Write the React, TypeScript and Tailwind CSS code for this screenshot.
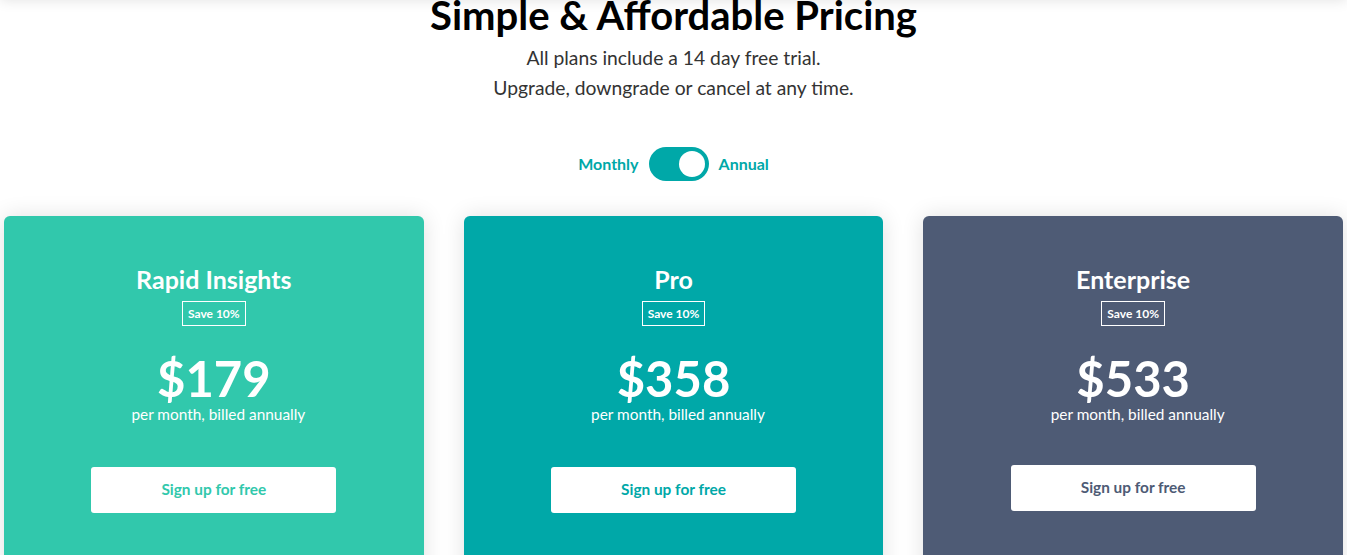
import React from "react";

const plans = [
  { name: "Rapid Insights", price: "$179", bg: "bg-[#31c8ac]", text: "text-[#31c8ac]", btnMt: "mt-[43px]" },
  { name: "Pro", price: "$358", bg: "bg-[#00a8a8]", text: "text-[#00a8a8]", btnMt: "mt-[43px]" },
  { name: "Enterprise", price: "$533", bg: "bg-[#4e5b75]", text: "text-[#4e5b75]", btnMt: "mt-[41px]" },
];

export default function App() {
  return (
    <div
      className="relative h-[555px] w-full overflow-hidden bg-white"
      style={{ fontFamily: "Lato, 'Noto Sans', sans-serif" }}
    >
      <div className="pointer-events-none absolute left-0 right-0 top-[-20px] h-[20px] shadow-[0_0_14px_rgba(0,0,0,0.12)]" />
      <div className="flex flex-col items-center">
        <h1 className="mt-[-9px] text-[40px] font-bold leading-[48px] text-black">
          Simple &amp; Affordable Pricing
        </h1>
        <p className="mt-[4px] text-center text-[19.3px] leading-[30px] text-[#333]">
          All plans include a 14 day free trial.
          <br />
          Upgrade, downgrade or cancel at any time.
        </p>
        <div className="mt-[44px] flex items-center gap-[10px]">
          <span className="text-[16px] font-bold text-[#00a8a8]">Monthly</span>
          <div className="flex h-[34px] w-[60px] items-center justify-end rounded-full bg-[#00a8a8] px-[4px]">
            <div className="h-[26px] w-[26px] rounded-full bg-white" />
          </div>
          <span className="text-[16px] font-bold text-[#00a8a8]">Annual</span>
        </div>
      </div>
      <div className="mt-[35px] grid grid-cols-3 gap-[40px] px-[4px]">
        {plans.map((p) => (
          <div
            key={p.name}
            className={`${p.bg} flex h-[400px] flex-col items-center rounded-t-[6px] pt-[48px] text-white shadow-[0_0_22px_rgba(0,0,0,0.12)]`}
          >
            <h2 className="text-[25px] font-bold leading-[30px]">{p.name}</h2>
            <div className="mt-[7px] border border-white px-[5px] text-[12px] font-bold leading-[23px]">
              Save 10%
            </div>
            <div className="mt-[27px] text-[49px] font-bold leading-[50px]">{p.price}</div>
            <div className="mt-[1px] pl-[9px] text-[15.4px] leading-[20px]">per month, billed annually</div>
            <button
              className={`${p.btnMt} h-[46px] w-[245px] rounded-[3px] bg-white text-[15.4px] font-bold ${p.text}`}
            >
              Sign up for free
            </button>
          </div>
        ))}
      </div>
    </div>
  );
}
